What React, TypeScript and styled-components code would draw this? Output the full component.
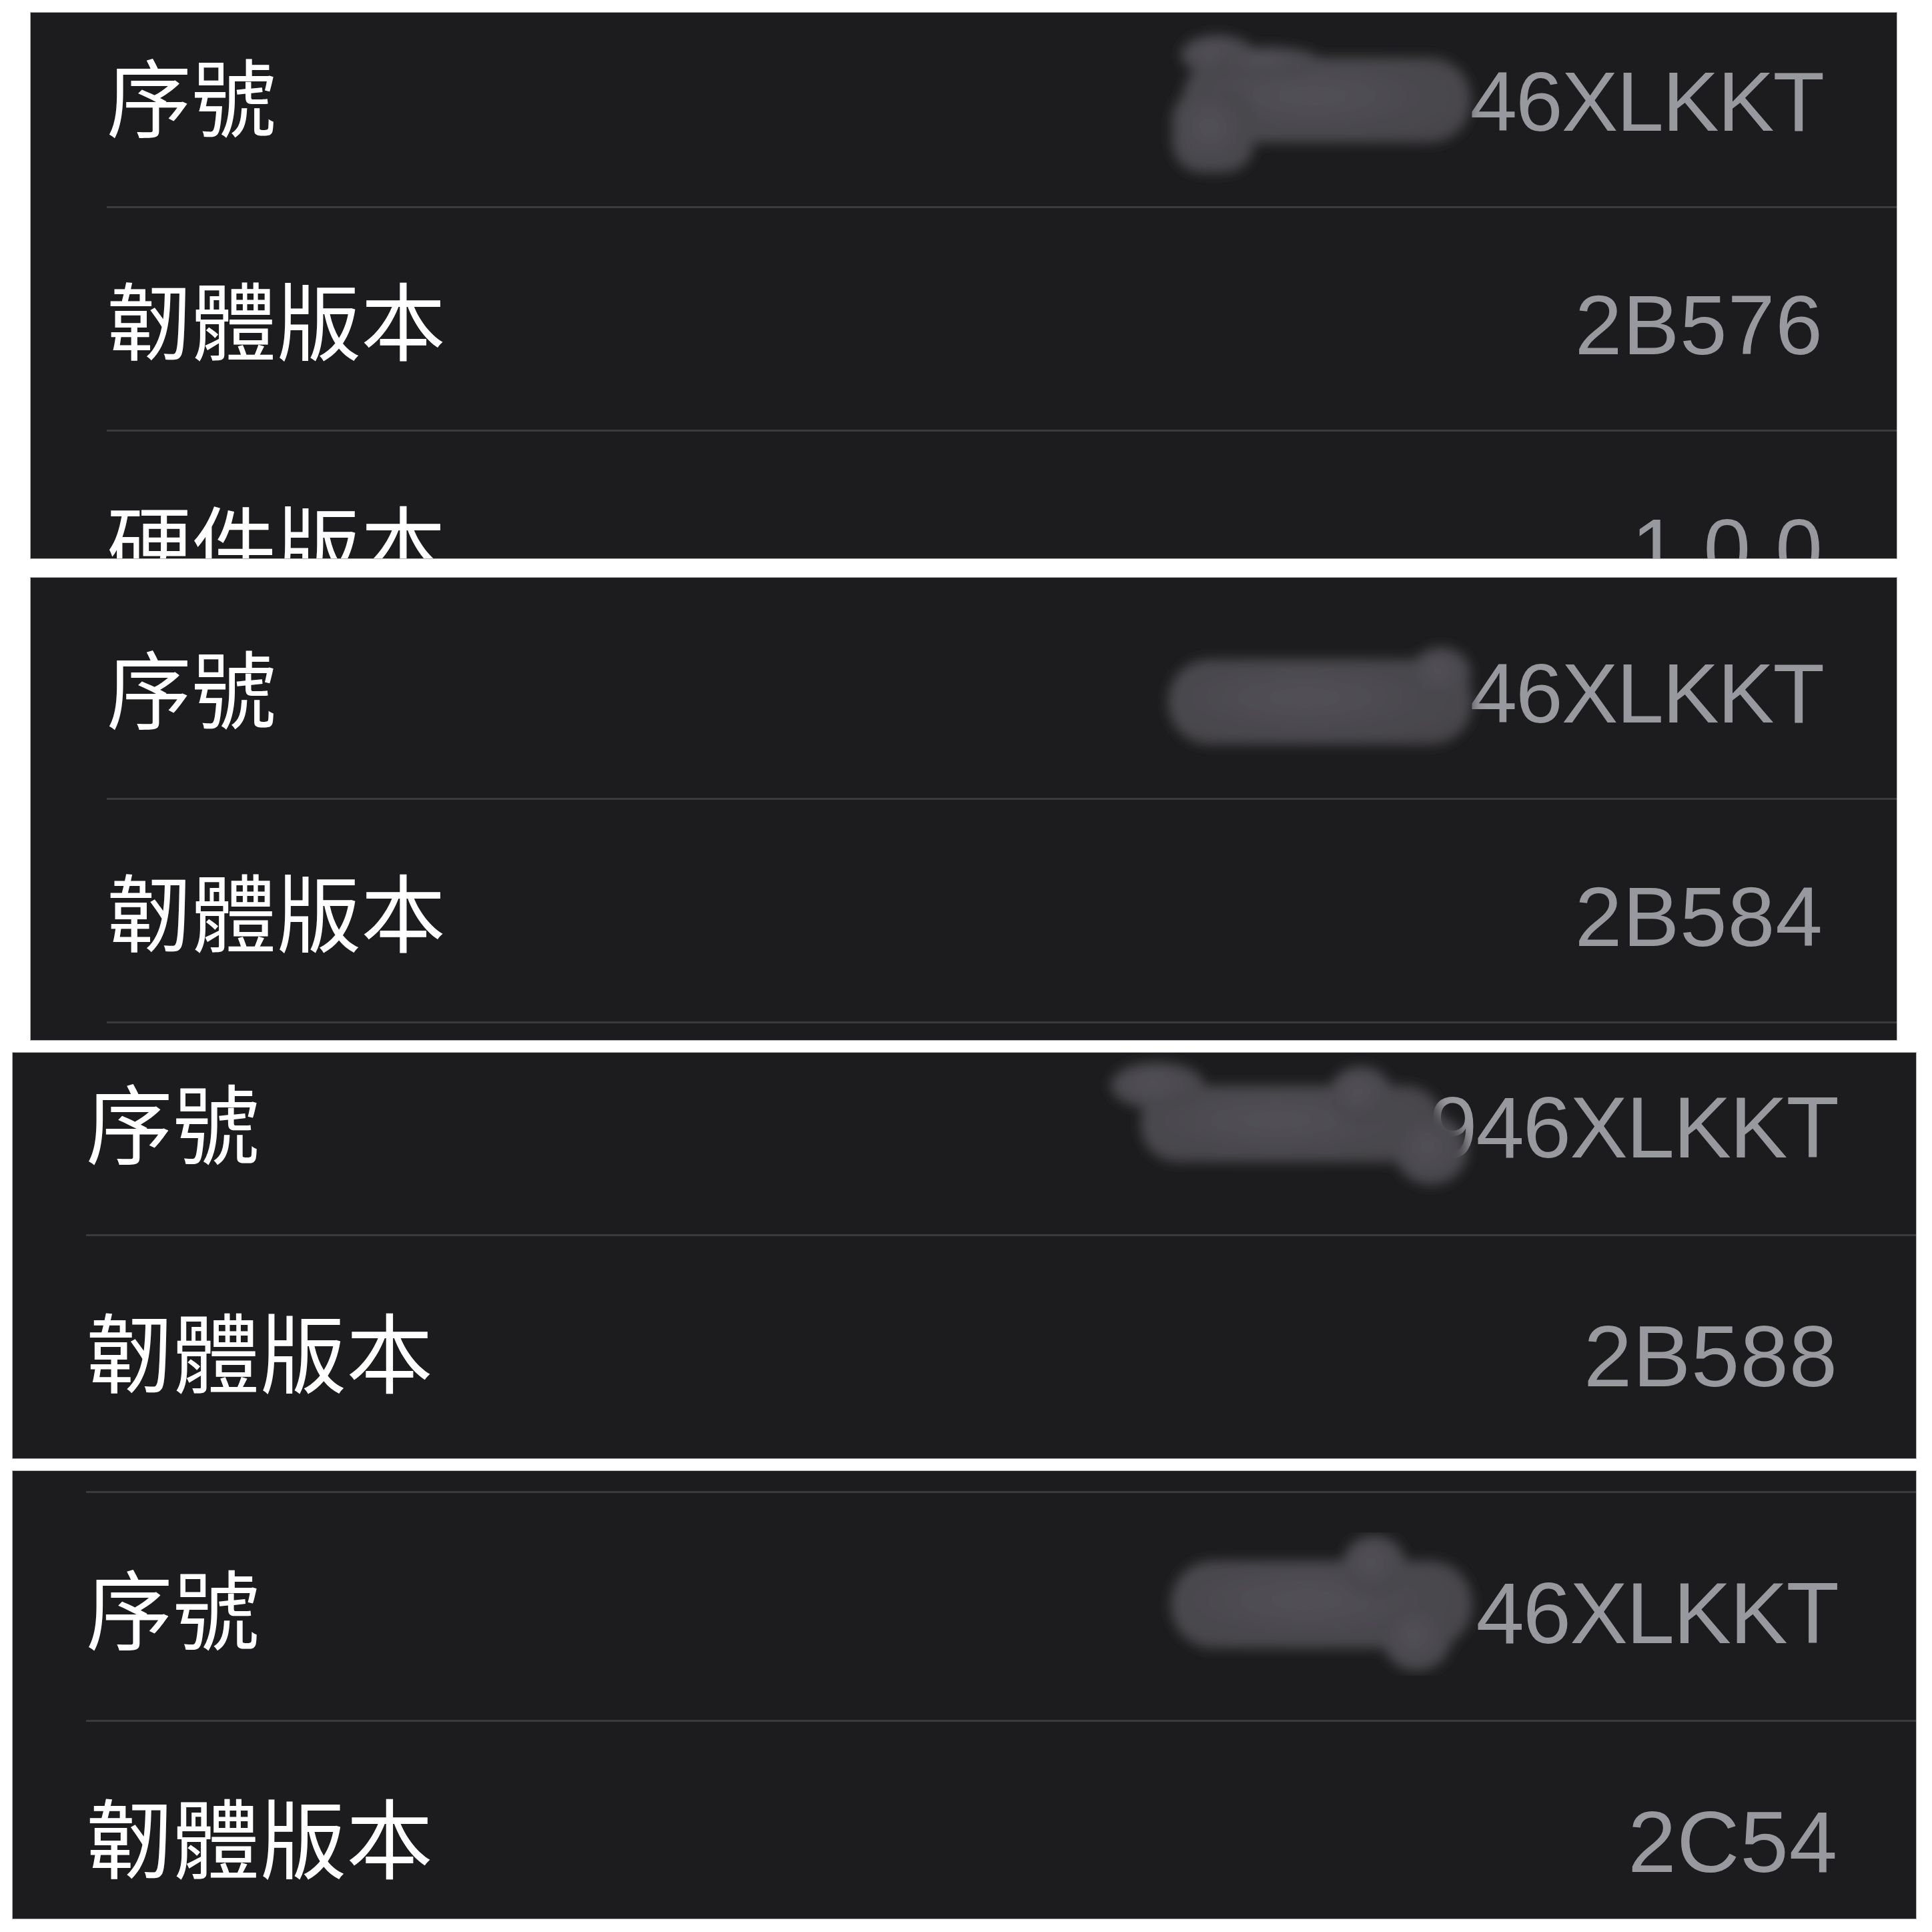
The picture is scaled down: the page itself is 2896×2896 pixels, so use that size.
import styled, { createGlobalStyle } from "styled-components";

const GlobalStyle = createGlobalStyle`
  html, body {
    margin: 0;
    padding: 0;
    background: #ffffff;
  }
`;

type Metrics = {
  font: number;
  pitch: number;
  inset: number;
  pad: number;
};

type Blob =
  | { kind: "rect"; x: number; y: number; w: number; h: number; r: number }
  | { kind: "ellipse"; cx: number; cy: number; rx: number; ry: number };

type Smudge = {
  id: string;
  right: number;
  top: number;
  width: number;
  height: number;
  shapes: Blob[];
};

type Item = { label?: string; value?: string; smudge?: Smudge };

type PanelData = {
  left: number;
  gap: number;
  width: number;
  height: number;
  offset: number;
  metrics: Metrics;
  rows: Item[];
};

const SERIAL_SPACING = -2;
const VERSION_SPACING = 1;

const Page = styled.div`
  display: flex;
  flex-direction: column;
  align-items: flex-start;
  width: 2896px;
  height: 2896px;
  padding-top: 19px;
  box-sizing: border-box;
  background: #ffffff;
  overflow: hidden;
`;

const Panel = styled.section<{
  $left: number;
  $gap: number;
  $width: number;
  $height: number;
}>`
  flex-shrink: 0;
  margin-left: ${(p) => p.$left}px;
  margin-top: ${(p) => p.$gap}px;
  width: ${(p) => p.$width}px;
  height: ${(p) => p.$height}px;
  background: #1c1c1e;
  overflow: hidden;
  box-shadow: 0 0 0 1px rgba(120, 120, 124, 0.55);
`;

const List = styled.div<{ $offset: number }>`
  margin-top: ${(p) => -p.$offset}px;
`;

const Row = styled.div<{ $m: Metrics }>`
  padding-left: ${(p) => p.$m.inset}px;
`;

const RowInner = styled.div<{ $m: Metrics }>`
  display: flex;
  align-items: center;
  box-sizing: border-box;
  height: ${(p) => p.$m.pitch}px;
  padding-top: 8px;
  padding-right: ${(p) => p.$m.pad}px;
  border-bottom: 3px solid #3b3b3e;
`;

const Line = styled.div`
  display: flex;
  flex: 1;
  justify-content: space-between;
  align-items: baseline;
`;

const Label = styled.span<{ $m: Metrics }>`
  font-family: "Noto Sans CJK TC", "Noto Sans CJK SC", sans-serif;
  font-size: ${(p) => p.$m.font}px;
  line-height: 1;
  color: #ffffff;
`;

const Value = styled.span<{ $m: Metrics; $spacing: number }>`
  position: relative;
  font-family: "Liberation Sans", Arial, sans-serif;
  font-size: ${(p) => p.$m.font}px;
  line-height: 1;
  letter-spacing: ${(p) => p.$spacing}px;
  color: #98989f;
`;

const SmudgeSvg = styled.svg<{ $right: number; $top: number }>`
  position: absolute;
  right: calc(100% + ${(p) => p.$right}px);
  top: ${(p) => p.$top}px;
  pointer-events: none;
`;

function SmudgeMark({ s, textWidth }: { s: Smudge; textWidth: number }) {
  // s.right is measured from the right edge of the value text
  return (
    <SmudgeSvg
      $right={s.right - textWidth}
      $top={s.top}
      width={s.width}
      height={s.height}
      viewBox={`0 0 ${s.width} ${s.height}`}
    >
      <defs>
        <filter id={s.id} x="-20%" y="-20%" width="140%" height="140%">
          <feGaussianBlur stdDeviation="9" />
        </filter>
        <radialGradient id={`${s.id}-g`} cx="45%" cy="45%" r="60%">
          <stop offset="0%" stopColor="#525156" />
          <stop offset="100%" stopColor="#46454a" />
        </radialGradient>
      </defs>
      <g filter={`url(#${s.id})`} fill={`url(#${s.id}-g)`}>
        {s.shapes.map((b, i) =>
          b.kind === "rect" ? (
            <rect key={i} x={b.x} y={b.y} width={b.w} height={b.h} rx={b.r} />
          ) : (
            <ellipse key={i} cx={b.cx} cy={b.cy} rx={b.rx} ry={b.ry} />
          )
        )}
      </g>
    </SmudgeSvg>
  );
}

// approximate advance of the serial in Liberation Sans, used to anchor the smudge
function serialWidth(text: string, font: number) {
  const widths: Record<string, number> = {
    "4": 0.556,
    "6": 0.556,
    "9": 0.556,
    X: 0.667,
    L: 0.556,
    K: 0.667,
    T: 0.611,
  };
  let w = 0;
  for (const c of text) w += (widths[c] ?? 0.6) * font + SERIAL_SPACING;
  return w;
}

function InfoRow({ item, m }: { item: Item; m: Metrics }) {
  const spacing = item.smudge ? SERIAL_SPACING : VERSION_SPACING;
  return (
    <Row $m={m}>
      <RowInner $m={m}>
        <Line>
          <Label $m={m}>{item.label}</Label>
          <Value $m={m} $spacing={spacing}>
            {item.smudge && item.value && (
              <SmudgeMark s={item.smudge} textWidth={serialWidth(item.value, m.font)} />
            )}
            {item.value}
          </Value>
        </Line>
      </RowInner>
    </Row>
  );
}

const small: Metrics = { font: 127, pitch: 335, inset: 114, pad: 110 };
const large: Metrics = { font: 130, pitch: 343, inset: 110, pad: 117 };

const panels: PanelData[] = [
  {
    left: 46,
    gap: 0,
    width: 2797,
    height: 818,
    offset: 42,
    metrics: small,
    rows: [
      {
        label: "序號",
        value: "46XLKKT",
        smudge: {
          id: "sm1",
          right: 493,
          top: -55,
          width: 510,
          height: 260,
          shapes: [
            { kind: "rect", x: 43, y: 52, w: 432, h: 128, r: 62 },
            { kind: "ellipse", cx: 95, cy: 48, rx: 55, ry: 30 },
            { kind: "ellipse", cx: 170, cy: 58, rx: 80, ry: 22 },
            { kind: "rect", x: 27, y: 100, w: 123, h: 125, r: 45 },
          ],
        },
      },
      { label: "韌體版本", value: "2B576" },
      { label: "硬件版本", value: "1.0.0" },
    ],
  },
  {
    left: 46,
    gap: 29,
    width: 2797,
    height: 693,
    offset: 2,
    metrics: small,
    rows: [
      {
        label: "序號",
        value: "46XLKKT",
        smudge: {
          id: "sm2",
          right: 493,
          top: -28,
          width: 520,
          height: 200,
          shapes: [
            { kind: "rect", x: 31, y: 40, w: 456, h: 128, r: 62 },
            { kind: "ellipse", cx: 440, cy: 62, rx: 45, ry: 40 },
          ],
        },
      },
      { label: "韌體版本", value: "2B584" },
      {},
    ],
  },
  {
    left: 19,
    gap: 19,
    width: 2853,
    height: 608,
    offset: 68,
    metrics: large,
    rows: [
      {
        label: "序號",
        value: "946XLKKT",
        smudge: {
          id: "sm3",
          right: 505,
          top: -53,
          width: 610,
          height: 230,
          shapes: [
            { kind: "rect", x: 70, y: 55, w: 452, h: 115, r: 55 },
            { kind: "ellipse", cx: 95, cy: 55, rx: 70, ry: 35 },
            { kind: "ellipse", cx: 400, cy: 70, rx: 48, ry: 44 },
            { kind: "ellipse", cx: 505, cy: 152, rx: 55, ry: 52 },
          ],
        },
      },
      { label: "韌體版本", value: "2B588" },
    ],
  },
  {
    left: 19,
    gap: 19,
    width: 2853,
    height: 671,
    offset: 310,
    metrics: large,
    rows: [
      {},
      {
        label: "序號",
        value: "46XLKKT",
        smudge: {
          id: "sm4",
          right: 515,
          top: -56,
          width: 520,
          height: 215,
          shapes: [
            { kind: "rect", x: 35, y: 42, w: 452, h: 132, r: 64 },
            { kind: "ellipse", cx: 340, cy: 50, rx: 48, ry: 46 },
            { kind: "ellipse", cx: 404, cy: 158, rx: 52, ry: 50 },
          ],
        },
      },
      { label: "韌體版本", value: "2C54" },
    ],
  },
];

export default function App() {
  return (
    <>
      <GlobalStyle />
      <Page>
        {panels.map((p, i) => (
          <Panel key={i} $left={p.left} $gap={p.gap} $width={p.width} $height={p.height}>
            <List $offset={p.offset}>
              {p.rows.map((item, j) => (
                <InfoRow key={j} item={item} m={p.metrics} />
              ))}
            </List>
          </Panel>
        ))}
      </Page>
    </>
  );
}
